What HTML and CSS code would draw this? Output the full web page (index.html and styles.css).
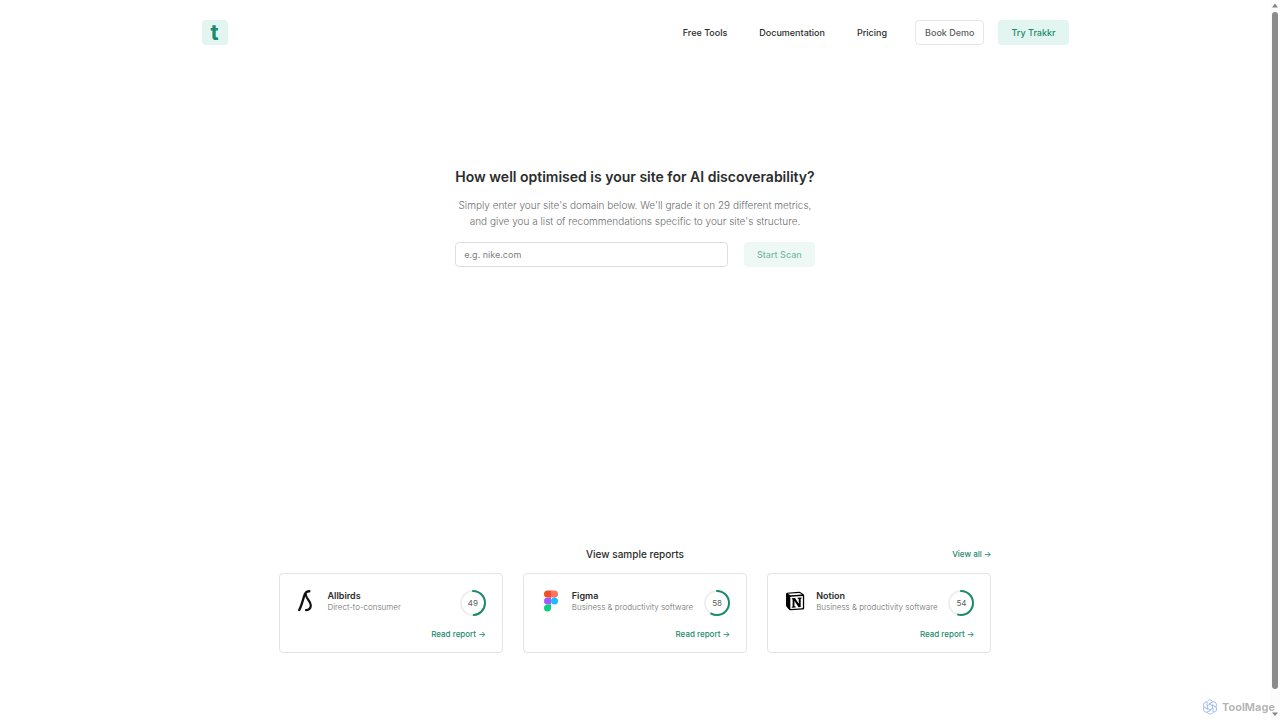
FILE: index.html
```html
<!DOCTYPE html>
<html lang="en">
<head>
    <meta charset="UTF-8">
    <meta name="viewport" content="width=device-width, initial-scale=1.0">
    <title>Trakkr - AI discoverability</title>
    <link rel="stylesheet" href="styles.css">
</head>
<body>
    <div class="page">
        <header class="header">
            <a class="logo" href="#" aria-label="Trakkr home">t</a>
            <nav class="nav">
                <a class="nav-link" href="#">Free Tools</a>
                <a class="nav-link" href="#">Documentation</a>
                <a class="nav-link" href="#">Pricing</a>
                <div class="nav-buttons">
                    <button class="btn btn-outline" type="button">Book Demo</button>
                    <button class="btn btn-soft" type="button">Try Trakkr</button>
                </div>
            </nav>
        </header>

        <main class="main">
            <section class="hero">
                <h1>How well optimised is your site for AI discoverability?</h1>
                <p>Simply enter your site's domain below. We'll grade it on 29 different metrics,<br>and give you a list of recommendations specific to your site's structure.</p>
                <form class="scan-form">
                    <input type="text" placeholder="e.g. nike.com" aria-label="Domain">
                    <button class="btn btn-soft" type="submit" disabled>Start Scan</button>
                </form>
            </section>

            <section class="reports">
                <div class="reports-head">
                    <h2>View sample reports</h2>
                    <a class="green-link" href="#">View all →</a>
                </div>
                <div class="cards">
                    <!-- Allbirds -->
                    <article class="card">
                        <div class="card-top">
                            <svg class="brand" viewBox="1 1 22 22" fill="none" stroke="#111" stroke-linecap="round" stroke-linejoin="round">
                                <path stroke-width="2.4" d="M4.200 21 C6.200 17.500 7.500 12.500 9 7.500 C10 4 11.500 2 14.300 2.300"/>
                                <path stroke-width="2.2" d="M10.800 5.500 C11 10 15.800 12 15.800 16.200 C15.800 18.800 14 20.800 11 21.200"/>
                            </svg>
                            <div class="card-text">
                                <h3>Allbirds</h3>
                                <p>Direct-to-consumer</p>
                            </div>
                            <div class="score">
                                <svg viewBox="0 0 26 26" fill="none" stroke-width="2">
                                    <circle cx="13" cy="13" r="12" stroke="#eeefee"/>
                                    <circle cx="13" cy="13" r="12" stroke="#1a8a6c" stroke-linecap="round" pathLength="100" stroke-dasharray="49 100" transform="rotate(-90 13 13)"/>
                                </svg>
                                <span>49</span>
                            </div>
                        </div>
                        <a class="green-link" href="#">Read report →</a>
                    </article>
                    <!-- Figma -->
                    <article class="card">
                        <div class="card-top">
                            <svg class="brand" viewBox="1 1 22 22">
                                <path fill="#f24e1e" d="M12 1.500H8.500a3.500 3.500 0 0 0 0 7H12z"/>
                                <path fill="#ff7262" d="M12 1.500h3.500a3.500 3.500 0 0 1 0 7H12z"/>
                                <path fill="#a259ff" d="M12 8.500H8.500a3.500 3.500 0 0 0 0 7H12z"/>
                                <circle fill="#1abcfe" cx="15.500" cy="12" r="3.500"/>
                                <path fill="#0acf83" d="M12 15.500H8.500a3.500 3.500 0 1 0 3.500 3.500z"/>
                            </svg>
                            <div class="card-text">
                                <h3>Figma</h3>
                                <p>Business &amp; productivity software</p>
                            </div>
                            <div class="score">
                                <svg viewBox="0 0 26 26" fill="none" stroke-width="2">
                                    <circle cx="13" cy="13" r="12" stroke="#eeefee"/>
                                    <circle cx="13" cy="13" r="12" stroke="#1a8a6c" stroke-linecap="round" pathLength="100" stroke-dasharray="58 100" transform="rotate(-90 13 13)"/>
                                </svg>
                                <span>58</span>
                            </div>
                        </div>
                        <a class="green-link" href="#">Read report →</a>
                    </article>
                    <!-- Notion -->
                    <article class="card">
                        <div class="card-top">
                            <svg class="brand" viewBox="0 0 24 24">
                                <path fill="#000" d="M3.500 2.900 L16.200 2 Q17.600 1.900 18.500 2.600 L21.300 4.700 Q22 5.200 22 6.200 V20 Q22 21.300 20.600 21.400 L7 22.200 Q6 22.300 5.300 21.400 L2.800 18.200 Q2.200 17.400 2.200 16.500 V4.400 Q2.200 3 3.500 2.900z"/>
                                <path fill="#fff" d="M4.200 4.100 L16.300 3.200 Q17 3.200 17.600 3.600 L19.500 5 L7.500 5.700 Q6.600 5.800 6 5.200z"/>
                                <path fill="#fff" d="M7.500 7.300 L20 6.500 Q20.600 6.500 20.600 7.100 V19.200 Q20.600 19.900 19.900 20 L7.700 20.700 Q6.900 20.700 6.900 20 V8 Q6.900 7.400 7.500 7.300z"/>
                                <path fill="#000" d="M8.500 8.900 L12 8.700 L16.100 14.900 V9.800 L14.900 9.600 V8.500 L19.200 8.200 V9.300 L18.200 9.700 V18.600 L15.900 18.800 L11.400 12 V17.700 L12.700 18 V19 L8.500 19.300 V18.300 L9.400 17.900 V10.200 L8.500 10z"/>
                            </svg>
                            <div class="card-text">
                                <h3>Notion</h3>
                                <p>Business &amp; productivity software</p>
                            </div>
                            <div class="score">
                                <svg viewBox="0 0 26 26" fill="none" stroke-width="2">
                                    <circle cx="13" cy="13" r="12" stroke="#eeefee"/>
                                    <circle cx="13" cy="13" r="12" stroke="#1a8a6c" stroke-linecap="round" pathLength="100" stroke-dasharray="54 100" transform="rotate(-90 13 13)"/>
                                </svg>
                                <span>54</span>
                            </div>
                        </div>
                        <a class="green-link" href="#">Read report →</a>
                    </article>
                </div>
            </section>
        </main>
    </div>

    <div class="scrollbar" aria-hidden="true">
        <svg viewBox="0 0 10 12"><path fill="#858585" d="M5 3.500 L8 7.500 H2z"/></svg>
        <div class="thumb"></div>
        <svg viewBox="0 0 10 12"><path fill="#858585" d="M2 4.500 H8 L5 8z"/></svg>
    </div>

    <div class="watermark">
        <svg viewBox="0 0 16 16" fill="none" stroke="#a3bff2" stroke-linecap="round">
            <path d="M8 5.200 L5 6.900 V3.800 C5 1.600 7 .6 8.600 1 C9.600 1.200 10.300 1.900 10.600 2.500"/>
            <path d="M8 5.200 L5 6.900 V3.800 C5 1.600 7 .6 8.600 1 C9.600 1.200 10.300 1.900 10.600 2.500" transform="rotate(60 8 8)"/>
            <path d="M8 5.200 L5 6.900 V3.800 C5 1.600 7 .6 8.600 1 C9.600 1.200 10.300 1.900 10.600 2.500" transform="rotate(120 8 8)"/>
            <path d="M8 5.200 L5 6.900 V3.800 C5 1.600 7 .6 8.600 1 C9.600 1.200 10.300 1.900 10.600 2.500" transform="rotate(180 8 8)"/>
            <path d="M8 5.200 L5 6.900 V3.800 C5 1.600 7 .6 8.600 1 C9.600 1.200 10.300 1.900 10.600 2.500" transform="rotate(240 8 8)"/>
            <path d="M8 5.200 L5 6.900 V3.800 C5 1.600 7 .6 8.600 1 C9.600 1.200 10.300 1.900 10.600 2.500" transform="rotate(300 8 8)"/>
        </svg>
        <span>ToolMage</span>
    </div>
</body>
</html>
```
FILE: styles.css
```css
* {
    box-sizing: border-box;
}

body {
    display: flex;
    min-height: 100vh;
    margin: 0;
    background: #fff;
    color: #2b2d2c;
    font-family: Inter, "Liberation Sans", sans-serif;
    font-size: 9px;
}

h1, h2, h3, p {
    margin: 0;
}

a {
    text-decoration: none;
}

.page {
    display: flex;
    flex: 1;
    flex-direction: column;
    padding: 20px 16px 67px;
}

/* Header */
.header {
    display: flex;
    align-items: center;
    justify-content: space-between;
    width: 100%;
    max-width: 867px;
    margin: 0 auto;
}

.logo {
    width: 26px;
    height: 25px;
    border-radius: 4px;
    background: #e3f5f0;
    color: #1a8a6c;
    font-size: 22px;
    font-weight: 700;
    line-height: 25px;
    text-align: center;
}

.nav {
    display: flex;
    align-items: center;
    gap: 32px;
}

.nav-link {
    color: #2b2d2c;
    font-weight: 500;
}

.nav-buttons {
    display: flex;
    gap: 14px;
    margin-left: -4px;
}

.btn {
    height: 25px;
    padding: 0 12px;
    border: 1px solid transparent;
    border-radius: 4px;
    font: inherit;
    font-weight: 500;
    cursor: pointer;
}

.btn-outline {
    padding: 0 9px;
    border-color: #e6e6e6;
    background: #fff;
    color: #5c5e5d;
}

.btn-soft {
    background: #e3f5f0;
    color: #1a8a6c;
}

.btn:disabled {
    opacity: 0.6;
    cursor: default;
}

/* Hero */
.main {
    display: flex;
    flex: 1;
    flex-direction: column;
    justify-content: space-between;
    align-items: center;
    padding-top: 122px;
}

.hero {
    text-align: center;
}

.hero h1 {
    font-size: 14px;
    font-weight: 600;
    line-height: 20px;
}

.hero p {
    margin-top: 10px;
    color: #6c6e6d;
    font-size: 10px;
    font-weight: 300;
    line-height: 16px;
}

.scan-form {
    display: flex;
    gap: 16px;
    margin-top: 13px;
}

.scan-form input {
    flex: 1;
    min-width: 0;
    height: 25px;
    padding: 0 8px;
    border: 1px solid #dedede;
    border-radius: 4px;
    font: inherit;
}

.scan-form input::placeholder {
    color: #7d7f7e;
}

/* Sample reports */
.reports {
    width: 100%;
    max-width: 713px;
}

.reports-head {
    display: grid;
    grid-template-columns: 1fr auto 1fr;
    align-items: center;
    margin-bottom: 11px;
}

.reports-head h2 {
    grid-column: 2;
    font-size: 10px;
    font-weight: 500;
    line-height: 16px;
}

.green-link {
    justify-self: end;
    color: #1a8a6c;
    font-size: 8px;
    font-weight: 500;
    line-height: 12px;
}

.cards {
    display: grid;
    grid-template-columns: repeat(3, 1fr);
    gap: 20px;
}

.card {
    display: flex;
    flex-direction: column;
    align-items: flex-end;
    gap: 12px;
    padding: 16px 16px 12px;
    border: 1px solid #e3e3e3;
    border-radius: 4px;
}

.card-top {
    display: flex;
    width: 100%;
}

.brand {
    width: 22px;
    height: 22px;
    margin-right: 10px;
}

.card-text {
    flex: 1;
    white-space: nowrap;
}

.card-text h3 {
    font-size: 9px;
    font-weight: 600;
    line-height: 11px;
}

.card-text p {
    color: #6c6e6d;
    font-size: 8px;
    font-weight: 300;
    line-height: 12px;
}

.score {
    display: grid;
    place-items: center;
    width: 26px;
    height: 26px;
    color: #5c5e5d;
    font-size: 8px;
}

.score svg,
.score span {
    grid-area: 1 / 1;
}

/* Scrollbar */
.scrollbar {
    display: flex;
    flex-direction: column;
    width: 10px;
    background: #fcfcfc;
}

.scrollbar svg {
    height: 12px;
}

.thumb {
    flex: 1;
    margin: 0 2px 19px;
    border-radius: 3px;
    background: #8b8b8b;
}

/* Watermark */
.watermark {
    position: fixed;
    right: 5px;
    bottom: 5px;
    display: flex;
    align-items: center;
    gap: 4px;
    color: #b5b5b5;
    font-size: 11px;
    font-weight: 700;
}

.watermark svg {
    width: 16px;
    height: 16px;
}
```
